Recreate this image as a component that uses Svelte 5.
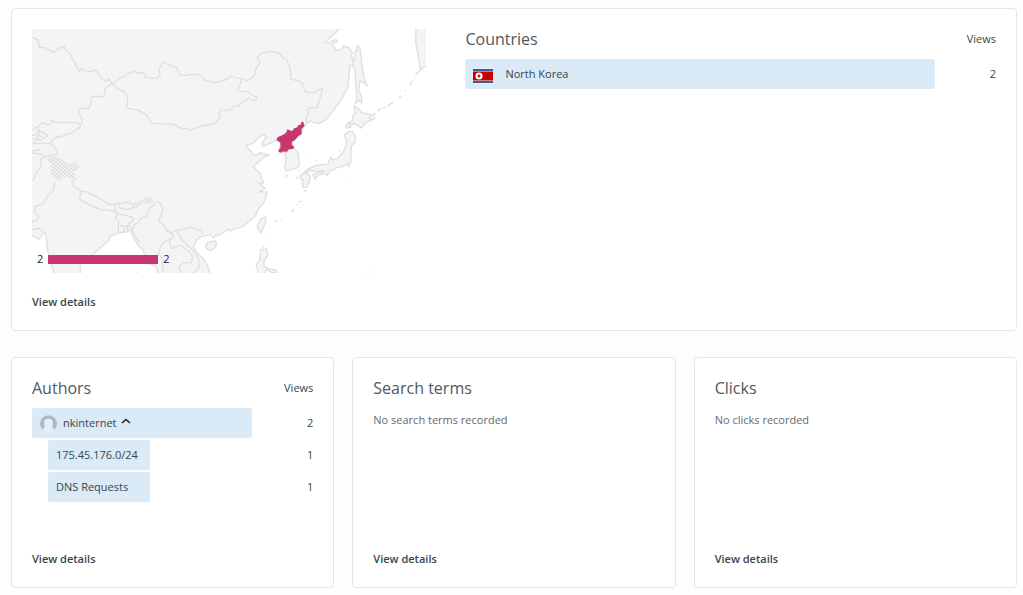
<!-- Audience overview: countries map, authors, search terms and clicks -->
<script lang="ts">
  type Row = { label: string; views: number };

  const countries: Row[] = [{ label: 'North Korea', views: 2 }];

  const author = {
    name: 'nkinternet',
    views: 2,
    posts: [
      { label: '175.45.176.0/24', views: 1 },
      { label: 'DNS Requests', views: 1 },
    ] as Row[],
  };

  const emptyCards = [
    { title: 'Search terms', message: 'No search terms recorded' },
    { title: 'Clicks', message: 'No clicks recorded' },
  ];

  let expanded = $state(true);

  const maxViews = $derived(Math.max(author.views, ...countries.map((c) => c.views)));

  function pct(views: number) {
    return (views / maxViews) * 100;
  }

  const land = [
    // mainland Asia
    'M90 80H1020L1014 88 995 108 975 127 988 130 996 122 1008 119 1012 125 1000 128 996 140 1004 143 1008 153 1014 148 1020 152 1030 138 1045 143 1057 158 1052 166 1062 190 1048 200 1045 235 1043 262 1025 295 1000 330 975 360 955 370 940 367 930 362 912 378 902 402 875 428 881 443 893 458 898 495 888 504 875 508 857 512 853 500 858 478 854 464 860 455 840 457 835 450 843 430 828 420 808 430 788 439 785 428 798 410 790 403 775 412 760 430 741 434 739 442 750 450 758 463 768 465 780 458 806 465 790 472 775 485 759 500 778 518 790 548 777 550 795 565 778 575 801 575 792 605 775 625 765 648 748 662 730 678 706 685 688 692 684 686 660 703 646 707 640 713 630 704 605 708 590 718 580 740 590 757 608 774 622 795 630 825H478L466 796 445 790 435 770 428 748 415 735 400 712 392 692 386 688 378 694 360 697 345 702 330 710 325 722 310 735 275 765 245 785 240 800 242 825H165L150 785 143 750 137 700 130 700 118 717 106 712 90 702Z',
    // Kamchatka
    'M1247 80 1246 130 1253 165 1260 210 1268 204 1285 190V80Z',
    // Sakhalin
    'M1065 155 1070 150 1068 141 1074 137 1080 150 1085 200 1092 235 1101 258 1090 246 1079 243 1075 270 1085 294 1083 308 1077 300 1065 310 1070 290 1066 250 1065 215 1058 195Z',
    // Hokkaido
    'M1062 318 1072 324 1085 338 1110 343 1108 356 1118 358 1098 366 1083 384 1064 371 1048 372 1052 380 1040 384 1036 378 1044 368 1056 362 1058 348 1064 338Z',
    // Honshu
    'M1046 393 1058 396 1066 412 1065 427 1053 436 1051 465 1053 480 1045 498 1043 490 1025 500 1010 501 1003 508 989 511 981 526 968 511 945 513 928 511 918 520 908 522 918 510 935 502 950 495 982 492 988 478 992 471 998 480 1015 472 1028 456 1036 440 1038 420 1032 404Z',
    // Kyushu and Shikoku
    'M900 526 917 516 930 528 927 544 920 560 908 561 906 545 910 538 901 537Z',
    'M938 524 950 518 968 514 969 521 952 526 944 537Z',
    // Taiwan
    'M785 653 797 651 795 668 787 688 782 698 773 686 772 675Z',
    // Hainan
    'M621 728 631 724 643 722 649 728 646 741 633 751 620 746 617 737Z',
    // Luzon
    'M782 748 799 746 803 765 791 782 792 800 808 806 830 811 829 817 814 817 800 808 795 815 790 825H776L768 792 777 783Z',
  ];

  const borders = [
    'M90 112 113 118 118 135 117 143 136 143 139 149 152 148 150 155 160 157 183 141 190 142 195 136 190 143 212 165 225 190 238 215 245 205 255 213 270 215 285 210 297 222 306 237 320 243 326 236 335 249',
    'M335 249 350 243 362 232 375 229 382 221 402 214 412 218 428 218 437 232 470 235 480 225 476 208 490 186 505 194 532 204 536 222 550 227 576 223 595 224 604 229 615 242 645 248 673 241 695 227 706 234 725 235 720 250 712 270 724 274 745 275 753 284 770 293 768 300 752 299 745 294 735 303 720 310 715 318 700 318 690 330 662 330 656 342 662 351 640 372 605 377 570 390 558 385 546 386 520 373 455 370 440 345 415 330 380 324 383 290 372 275 355 268 345 258 335 249',
    'M725 235 740 242 748 238 760 230 768 205 780 185 773 180 772 172 782 160 815 154 838 160 845 169 860 180 870 207 872 238 897 242 910 255 911 267 918 277 945 277 954 270 967 265 962 285 950 322 934 323 922 327 925 340 918 352 920 370',
    'M335 249 322 261 314 267 312 290 277 288 268 325 248 324 235 330 246 360 242 375 232 369 215 367 165 367 156 361 148 375 125 368 115 382 106 383 90 392',
    'M242 375 238 383 215 398 198 402 180 412 175 408 155 422 153 431 168 448 171 463 156 466 138 470 124 463 102 458 90 459',
    'M90 408 107 404 118 397 112 388 126 396 143 405 130 415 118 405 108 413 126 420 108 421 98 415',
    'M90 428 126 430 153 431M90 450 108 452 120 447',
    'M138 470 124 475 122 500 108 520 100 540 90 540M165 544 160 570 145 585 130 610 105 620 103 632 116 650 112 660 96 664M90 690 116 684 137 700',
    'M215 542 222 560 245 573M245 573 262 575 278 585 300 595 325 612 345 613 344 633 318 629 300 628 270 615 250 605 238 594 245 573',
    'M345 613 356 606 360 626 378 628 397 625 399 612 375 606 356 612M344 633 352 645 346 653 356 665 354 696 362 697',
    'M348 638 372 645 400 652 400 660 384 672 392 682 396 700M360 674 373 680 380 676 384 694 370 696 372 684',
    'M465 610 446 628 439 648 420 657 410 672 402 672 398 692 404 708 418 726',
    'M465 605 478 606 486 620 488 632 475 663 492 675 496 686 512 696 520 710 510 717 497 722 482 735 475 760 489 777 487 802 494 825',
    'M496 690 513 697 530 690 546 690 562 684 573 680 588 688 604 690 607 702M530 692 542 715 550 724 572 744 588 763 597 780 595 803 585 815 567 825',
    'M508 718 508 728 515 746 525 740 543 736 553 745 567 754 577 770 574 787 550 788 536 799 542 815 535 825',
  ];

  // small island chains, drawn as short strokes only
  const islets =
    'M1260 210 1245 225M1236 242 1228 256M1215 268V273M1201 288 1196 294M1178 306 1160 318M1155 322 1148 326M1144 324 1130 333M1126 339 1112 348M1125 350 1118 356M853 528 863 526M888 537 894 530M896 509 898 514M911 573 919 570M896 606 904 604M889 614 892 612M874 636 881 628M822 664 831 661M841 658H844M1035 532H1037M788 738 792 742M796 718V721M915 461H917M947 484 949 481M1016 454 1019 451M1114 794H1116M1101 818 1104 816M409 816 411 819';

  const northKorea =
    'M828 419 833 411 849 404 858 397 862 387 869 391 878 392 880 385 890 382 895 375 902 373 903 366 909 365 911 373 913 378 904 386 904 402 894 408 884 420 875 425 874 434 882 441 878 447 865 448 860 455 847 454 840 458 834 453 841 441 840 427Z';
</script>

<main class="page">
  <section class="card overview">
    <div class="columns">
      <div class="map">
        <svg viewBox="96 87 1182 732" role="img" aria-label="Views by country">
          <defs>
            <pattern id="hatch" width="8" height="8" patternUnits="userSpaceOnUse" patternTransform="rotate(40)">
              <rect width="8" height="8" fill="#f4f4f4" />
              <rect width="8" height="3" fill="#d4d4d4" />
            </pattern>
            <pattern id="hatch-steep" width="8" height="8" patternUnits="userSpaceOnUse" patternTransform="rotate(60)">
              <rect width="8" height="8" fill="#f4f4f4" />
              <rect width="8" height="3" fill="#d4d4d4" />
            </pattern>
          </defs>
          {#each land as d}
            <path class="land" {d} />
          {/each}
          {#each borders as d}
            <path class="border" {d} />
          {/each}
          <path class="border" d={islets} />
          <path
            fill="url(#hatch)"
            d="M140 474 153 467 175 472 190 483 207 492 226 484 239 498 230 510 220 515 231 540 222 544 205 530 188 532 175 544 152 522 156 500Z"
          />
          <path fill="url(#hatch-steep)" d="M397 624 402 610 430 595 446 590 466 604 450 610 425 610 408 626Z" />
          <path class="active" d={northKorea} />
        </svg>
        <div class="legend">
          <span>2</span>
          <span class="scale"></span>
          <span>2</span>
        </div>
      </div>

      <div>
        <header class="head">
          <h2>Countries</h2>
          <span>Views</span>
        </header>
        <ul class="rows">
          {#each countries as country}
            <li class="row">
              <div class="track">
                <div class="bar" style="width: {pct(country.views)}%">
                  <svg class="flag" viewBox="0 0 20 16" aria-hidden="true">
                    <rect width="20" height="16" fill="#f3f3f3" />
                    <rect width="20" height="2" y="1" fill="#3d5a9e" />
                    <rect width="20" height="2" y="13" fill="#3d5a9e" />
                    <rect width="20" height="9" y="3.5" fill="#c80000" />
                    <circle cx="6" cy="8" r="3.5" fill="#fff" />
                    <path
                      fill="#c80000"
                      d="M6 5.800 6.600 7.300H8.100L6.900 8.300 7.300 9.900 6 9 4.700 9.900 5.100 8.300 3.900 7.300H5.400Z"
                    />
                  </svg>
                  <span>{country.label}</span>
                </div>
              </div>
              <span class="count">{country.views}</span>
            </li>
          {/each}
        </ul>
      </div>
    </div>
    <a class="details" href="#countries">View details</a>
  </section>

  <div class="cards">
    <section class="card">
      <header class="head">
        <h2>Authors</h2>
        <span>Views</span>
      </header>
      <ul class="rows">
        <li class="row">
          <div class="track">
            <button
              class="bar"
              style="width: {pct(author.views)}%"
              aria-expanded={expanded}
              onclick={() => (expanded = !expanded)}
            >
              <svg class="avatar" viewBox="0 0 16 16" aria-hidden="true">
                <path
                  fill="#a9bac6"
                  d="M2.800 14.200A8 8 0 1 1 13.200 14.200C13 12.500 12 11.600 10.800 11.100 11.700 10 12 8.600 12 7.200 12 4.800 10.400 3.500 8 3.500S4 4.800 4 7.200C4 8.600 4.300 10 5.200 11.100 4 11.600 3 12.500 2.800 14.200Z"
                />
                <path
                  fill="#e3eef8"
                  d="M2.800 14.200C3 12.500 4 11.600 5.200 11.100 4.300 10 4 8.600 4 7.200 4 4.800 5.600 3.500 8 3.500S12 4.800 12 7.200C12 8.600 11.700 10 10.800 11.100 12 11.600 13 12.500 13.200 14.200A8 8 0 0 1 2.800 14.200Z"
                />
              </svg>
              <span class="author">{author.name}</span>
              <svg class="chevron" class:closed={!expanded} viewBox="0 0 10 8" aria-hidden="true">
                <path d="M1 6 5 2.500 9 6" fill="none" stroke="#1d2327" stroke-width="1.600" />
              </svg>
            </button>
          </div>
          <span class="count">{author.views}</span>
        </li>
        {#if expanded}
          {#each author.posts as post}
            <li class="row child">
              <div class="track">
                <div class="bar" style="width: {pct(post.views)}%">{post.label}</div>
              </div>
              <span class="count">{post.views}</span>
            </li>
          {/each}
        {/if}
      </ul>
      <a class="details" href="#authors">View details</a>
    </section>

    {#each emptyCards as card}
      <section class="card">
        <header class="head">
          <h2>{card.title}</h2>
        </header>
        <p class="empty">{card.message}</p>
        <a class="details" href="#details">View details</a>
      </section>
    {/each}
  </div>
</main>

<style>
  :global(body) {
    margin: 0;
    background: #fdfdfd;
  }

  .page {
    display: flex;
    flex-direction: column;
    gap: 26px;
    padding: 8px 6px 6px 11px;
    color: #3c434a;
    font-family: 'Open Sans', 'Noto Sans', sans-serif;
    font-size: 11px;
    line-height: 20px;
  }

  .card {
    display: flex;
    flex-direction: column;
    box-sizing: border-box;
    min-width: 0;
    padding: 20px 20px 18px;
    background: #fff;
    border: 1px solid #e6e6e6;
    border-radius: 4px;
  }

  .cards {
    display: grid;
    grid-template-columns: repeat(3, minmax(0, 1fr));
    gap: 18px;
  }

  .cards .card {
    min-height: 231px;
  }

  .columns {
    display: grid;
    grid-template-columns: 394fr 530fr;
    gap: 39px;
    margin-bottom: 19px;
  }

  .map {
    position: relative;
  }

  .map > svg {
    display: block;
    width: 100%;
  }

  .land {
    fill: #f4f4f4;
    stroke: #dfdfdf;
    stroke-width: 4;
  }

  .border {
    fill: none;
    stroke: #dfdfdf;
    stroke-width: 4;
    stroke-linejoin: round;
  }

  .active {
    fill: #c9356e;
  }

  .legend {
    position: absolute;
    bottom: 4px;
    left: 5px;
    display: flex;
    gap: 5px;
    align-items: center;
    color: #222;
  }

  .scale {
    width: 110px;
    height: 9px;
    background: #c9356e;
  }

  .head {
    display: flex;
    align-items: center;
    justify-content: space-between;
    margin-bottom: 10px;
  }

  h2 {
    margin: 0;
    color: #50575e;
    font-size: 16px;
    font-weight: 400;
  }

  .rows {
    display: flex;
    flex-direction: column;
    gap: 2px;
    margin: 0;
    padding: 0;
    list-style: none;
  }

  .row {
    display: flex;
    align-items: center;
  }

  .child {
    padding-left: 16px;
  }

  .track {
    flex: 1;
    min-width: 0;
  }

  .bar {
    display: flex;
    align-items: center;
    box-sizing: border-box;
    height: 30px;
    padding: 0 8px;
    border: 0;
    border-radius: 2px;
    background: #daeaf7;
    color: inherit;
    font: inherit;
    white-space: nowrap;
  }

  button.bar {
    cursor: pointer;
  }

  .count {
    width: 61px;
    text-align: right;
  }

  .flag {
    width: 20px;
    height: 16px;
    margin: 4px 12px 0 0;
  }

  .avatar {
    width: 17px;
    height: 17px;
    margin-right: 6px;
  }

  .chevron {
    width: 10px;
    height: 8px;
    margin: 0 0 4px 4px;
  }

  .chevron.closed {
    transform: rotate(180deg);
  }

  .empty {
    margin: 0;
    padding-top: 2px;
    color: #646970;
  }

  .details {
    align-self: flex-start;
    margin-top: auto;
    color: #3c434a;
    font-weight: 600;
    text-decoration: none;
  }
</style>
